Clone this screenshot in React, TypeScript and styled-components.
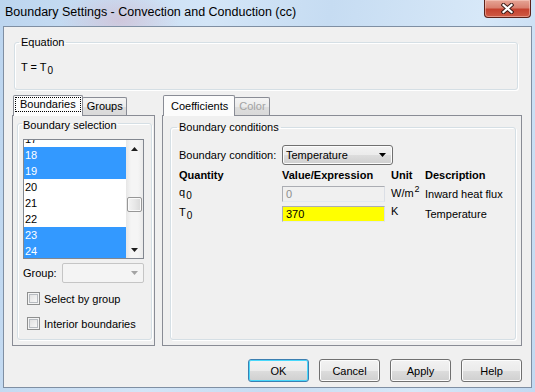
import styled, { createGlobalStyle } from 'styled-components';

const GlobalStyle = createGlobalStyle`
  html, body {
    margin: 0;
    padding: 0;
  }
  body {
    font-family: "Liberation Sans", Arial, sans-serif;
    font-size: 11px;
    color: #000;
    background: #bfd6ef;
  }
`;

const BOUNDARIES = [17, 18, 19, 20, 21, 22, 23, 24];
const SELECTED = [18, 19, 23, 24];
const LIST_SCROLL = 9;
const THUMB_OFFSET = 40;

const App = () => {
  return (
    <>
      <GlobalStyle />
      <Window>
        <TitleBar>
          <Title>Boundary Settings - Convection and Conduction (cc)</Title>
          <CloseButton aria-label="Close">
            <svg width="13" height="11" viewBox="0 0 13 11">
              <path d="M2.5 2 L10.5 9 M10.5 2 L2.5 9" stroke="#3d1d18" strokeWidth="4.2" strokeLinecap="square" />
              <path d="M2.5 2 L10.5 9 M10.5 2 L2.5 9" stroke="#fff" strokeWidth="2.2" strokeLinecap="square" />
            </svg>
          </CloseButton>
        </TitleBar>

        <Client>
          <EquationBox>
            <Legend>Equation</Legend>
            <EquationText>
              T = T<Sub>0</Sub>
            </EquationText>
          </EquationBox>

          <Panes>
            <TabControl $width={143}>
              <TabStrip>
                <Tab $active $focus>
                  <FocusLabel>Boundaries</FocusLabel>
                </Tab>
                <Tab>Groups</Tab>
              </TabStrip>
              <TabPage $padLeft={4} $padRight={2}>
                <SelectionBox>
                  <Legend $low>Boundary selection</Legend>
                  <ListBox>
                    <ListViewport>
                      <ListItems $scroll={LIST_SCROLL}>
                        {BOUNDARIES.map((n) => (
                          <ListItem key={n} $selected={SELECTED.includes(n)}>
                            {n}
                          </ListItem>
                        ))}
                      </ListItems>
                    </ListViewport>
                    <ScrollBar>
                      <ScrollButton>
                        <svg width="7" height="4" viewBox="0 0 7 4">
                          <polygon points="0,4 3.5,0 7,4" fill="#1e1e1e" />
                        </svg>
                      </ScrollButton>
                      <ScrollTrack $offset={THUMB_OFFSET}>
                        <Thumb />
                      </ScrollTrack>
                      <ScrollButton>
                        <svg width="7" height="4" viewBox="0 0 7 4">
                          <polygon points="0,0 7,0 3.5,4" fill="#1e1e1e" />
                        </svg>
                      </ScrollButton>
                    </ScrollBar>
                  </ListBox>

                  <GroupRow>
                    <span>Group:</span>
                    <DisabledCombo>
                      <svg width="7" height="4" viewBox="0 0 7 4">
                        <polygon points="0,0 7,0 3.5,4" fill="#a3a3a3" />
                      </svg>
                    </DisabledCombo>
                  </GroupRow>

                  <CheckRow>
                    <CheckBox />
                    Select by group
                  </CheckRow>
                  <CheckRow>
                    <CheckBox />
                    Interior boundaries
                  </CheckRow>
                </SelectionBox>
              </TabPage>
            </TabControl>

            <TabControl $width={360}>
              <TabStrip>
                <Tab $active>Coefficients</Tab>
                <Tab $disabled>Color</Tab>
              </TabStrip>
              <TabPage $padLeft={7} $padRight={5}>
                <ConditionsBox>
                  <Legend>Boundary conditions</Legend>
                  <ConditionRow>
                    <ConditionLabel>Boundary condition:</ConditionLabel>
                    <Combo>
                      <span>Temperature</span>
                      <svg width="7" height="4" viewBox="0 0 7 4">
                        <polygon points="0,0 7,0 3.5,4" fill="#000" />
                      </svg>
                    </Combo>
                  </ConditionRow>
                  <CoeffGrid>
                    <HeadCell>Quantity</HeadCell>
                    <HeadCell>Value/Expression</HeadCell>
                    <HeadCell>Unit</HeadCell>
                    <HeadCell>Description</HeadCell>

                    <SymbolCell>
                      q<Sub>0</Sub>
                    </SymbolCell>
                    <Cell>
                      <ValueInput $disabled>0</ValueInput>
                    </Cell>
                    <UnitCell>
                      W/m<Sup>2</Sup>
                    </UnitCell>
                    <Cell>Inward heat flux</Cell>

                    <SymbolCell>
                      T<Sub>0</Sub>
                    </SymbolCell>
                    <Cell>
                      <ValueInput $highlight>370</ValueInput>
                    </Cell>
                    <UnitCell $raised>K</UnitCell>
                    <Cell>Temperature</Cell>
                  </CoeffGrid>
                </ConditionsBox>
              </TabPage>
            </TabControl>
          </Panes>

          <ButtonRow>
            <DialogButton $default>OK</DialogButton>
            <DialogButton>Cancel</DialogButton>
            <DialogButton>Apply</DialogButton>
            <DialogButton>Help</DialogButton>
          </ButtonRow>
        </Client>
      </Window>
    </>
  );
};

export default App;

const Window = styled.div`
  width: 535px;
  height: 392px;
  display: flex;
  flex-direction: column;
  background:
    radial-gradient(ellipse 60px 30px at 120px 20px, rgba(214, 170, 190, 0.45), transparent),
    linear-gradient(100deg, #bcd5ef 0%, #d3e5f7 35%, #c6dcf2 55%, #d7e8f8 80%, #c2d9f1 100%);
`;

const TitleBar = styled.div`
  height: 26px;
  display: flex;
  align-items: flex-start;
`;

const Title = styled.div`
  padding: 4px 0 0 5px;
  font-size: 12.5px;
  line-height: 17px;
  color: #000;
`;

const CloseButton = styled.div`
  margin-left: auto;
  margin-right: 4px;
  width: 45px;
  height: 17px;
  display: flex;
  align-items: center;
  justify-content: center;
  border: 1px solid #5b2119;
  border-top: none;
  border-radius: 0 0 4px 4px;
  background: linear-gradient(#e6a596 0%, #d9806f 45%, #c5422f 55%, #cf5b45 100%);
  box-shadow: inset 0 0 0 1px rgba(255, 220, 210, 0.45);
`;

const Client = styled.div`
  flex: 1;
  margin: 0 3px 4px 3px;
  border: 1px solid #7f8fa3;
  background: #f0f0f0;
  padding-top: 9px;
  display: flex;
  flex-direction: column;
`;

const GroupBox = styled.fieldset`
  margin: 0;
  min-width: 0;
  border: 1px solid #d5dfe5;
  border-radius: 3px;
  box-shadow: inset 1px 1px 0 #fff, 1px 1px 0 #fff;
`;

const EquationBox = styled(GroupBox)`
  margin-left: 10px;
  width: 504px;
  height: 54px;
  box-sizing: border-box;
  padding: 0 6px;
`;

const SelectionBox = styled(GroupBox)`
  flex: 1;
  padding: 8px 0 0 5px;
  display: flex;
  flex-direction: column;
`;

const ConditionsBox = styled(GroupBox)`
  flex: 1;
  margin-top: 5px;
  padding: 11px 0 0 8px;
`;

const Legend = styled.legend<{ $low?: boolean }>`
  padding: ${(p) => (p.$low ? '4px 1px 0' : '0 2px')};
  margin-left: ${(p) => (p.$low ? '-1px' : '-2px')};
  line-height: ${(p) => (p.$low ? '11px' : '13px')};
  font-size: 11px;
`;

const EquationText = styled.div`
  padding-top: 12px;
  line-height: 13px;
`;

const Sub = styled.span`
  font-size: 10px;
  position: relative;
  top: 3px;
  margin-left: 1px;
`;

const Sup = styled.span`
  font-size: 9px;
  position: relative;
  top: -5px;
  margin-left: 1px;
`;

const Panes = styled.div`
  margin-top: 5px;
  height: 251px;
  padding-left: 8px;
  display: flex;
  gap: 7px;
`;

const TabControl = styled.div<{ $width: number }>`
  width: ${(p) => p.$width}px;
  display: flex;
  flex-direction: column;
`;

const TabStrip = styled.div`
  height: 20px;
  padding-left: 1px;
  display: flex;
  align-items: flex-end;
`;

const Tab = styled.div<{ $active?: boolean; $focus?: boolean; $disabled?: boolean }>`
  position: relative;
  z-index: ${(p) => (p.$active ? 1 : 0)};
  box-sizing: border-box;
  height: ${(p) => (p.$active ? '21px' : '18px')};
  margin-bottom: ${(p) => (p.$active ? '-1px' : '0')};
  padding: ${(p) => (p.$focus ? '1px 1px 0' : p.$active ? '0 6px 0 7px' : '0 3px 0 4px')};
  display: flex;
  align-items: ${(p) => (p.$focus ? 'flex-start' : 'center')};
  border: 1px solid #898c95;
  border-bottom: none;
  border-radius: 2px 2px 0 0;
  & + & {
    margin-left: -1px;
  }
  color: ${(p) => (p.$disabled ? '#a3a3a3' : '#000')};
  background: ${(p) =>
    p.$active ? '#fcfcfc' : 'linear-gradient(#f4f4f4 0%, #ebebeb 50%, #dedede 51%, #d9d9d9 100%)'};
  line-height: 13px;
`;

const FocusLabel = styled.span`
  padding: 0 4px;
  border: 1px dotted #000;
  line-height: 13px;
`;

const TabPage = styled.div<{ $padLeft: number; $padRight: number }>`
  flex: 1;
  border: 1px solid #898c95;
  background: #f0f0f0;
  padding: 0 ${(p) => p.$padRight}px 5px ${(p) => p.$padLeft}px;
  display: flex;
  flex-direction: column;
`;

const ListBox = styled.div`
  width: 121px;
  height: 120px;
  box-sizing: border-box;
  border: 1px solid #828790;
  background: #fff;
  display: flex;
`;

const ListViewport = styled.div`
  flex: 1;
  overflow: hidden;
`;

const ListItems = styled.div<{ $scroll: number }>`
  margin-top: ${(p) => -p.$scroll}px;
`;

const ListItem = styled.div<{ $selected: boolean }>`
  height: 16px;
  line-height: 16px;
  padding-left: 1px;
  color: ${(p) => (p.$selected ? '#fff' : '#000')};
  background: ${(p) => (p.$selected ? '#3399ff' : '#fff')};
`;

const ScrollBar = styled.div`
  width: 17px;
  display: flex;
  flex-direction: column;
  background: linear-gradient(90deg, #e6e6e6, #f5f5f5 30%, #f5f5f5 70%, #eaeaea);
`;

const ScrollButton = styled.div`
  height: 17px;
  display: flex;
  align-items: center;
  justify-content: center;
`;

const ScrollTrack = styled.div<{ $offset: number }>`
  flex: 1;
  padding-top: ${(p) => p.$offset}px;
`;

const Thumb = styled.div`
  margin: 0 0 0 1px;
  width: 15px;
  height: 15px;
  box-sizing: border-box;
  border: 1px solid #979797;
  border-radius: 2px;
  background: linear-gradient(90deg, #f4f4f4, #e8e8e8 50%, #d9d9d9);
  box-shadow: inset 0 0 0 1px #fafafa;
`;

const GroupRow = styled.div`
  width: 121px;
  margin-top: 4px;
  display: flex;
  align-items: center;
  justify-content: space-between;
`;

const DisabledCombo = styled.div`
  width: 82px;
  height: 20px;
  box-sizing: border-box;
  border: 1px solid #c5c5c5;
  border-radius: 2px;
  background: #f4f4f4;
  display: flex;
  align-items: center;
  justify-content: flex-end;
  padding-right: 5px;
`;

const CheckRow = styled.label`
  display: flex;
  align-items: center;
  gap: 4px;
  height: 13px;
  margin: 9px 0 0 4px;
  & + & {
    margin-top: 12px;
  }
`;

const CheckBox = styled.span`
  width: 13px;
  height: 13px;
  box-sizing: border-box;
  border: 1px solid #8e8f8f;
  background: linear-gradient(135deg, #dcdcdc, #fdfdfd);
  box-shadow: inset 0 0 0 1px #f4f4f4, inset 0 0 0 2px #b7bbc0;
`;

const ConditionRow = styled.div`
  display: flex;
  align-items: center;
  height: 20px;
`;

const ConditionLabel = styled.span`
  width: 103px;
`;

const Combo = styled.div`
  width: 111px;
  height: 20px;
  box-sizing: border-box;
  padding: 0 6px 0 3px;
  border: 1px solid #707070;
  border-radius: 3px;
  background: linear-gradient(#f2f2f2 0%, #ebebeb 50%, #dddddd 51%, #cfcfcf 100%);
  box-shadow: inset 0 0 0 1px #fcfcfc;
  display: flex;
  align-items: center;
  justify-content: space-between;
`;

const CoeffGrid = styled.div`
  display: grid;
  grid-template-columns: 103px 109px 34px 1fr;
  grid-template-rows: 19px 20px 20px;
  align-items: center;
`;

const HeadCell = styled.div`
  font-weight: bold;
`;

const Cell = styled.div`
  line-height: 13px;
`;

const SymbolCell = styled.div`
  line-height: 13px;
  padding-bottom: 4px;
`;

const UnitCell = styled.div<{ $raised?: boolean }>`
  line-height: 13px;
  padding-bottom: ${(p) => (p.$raised ? '5px' : '1px')};
`;

const ValueInput = styled.div<{ $disabled?: boolean; $highlight?: boolean }>`
  width: 103px;
  height: 16px;
  box-sizing: border-box;
  padding-left: 3px;
  line-height: 14px;
  border: 1px solid #abadb3;
  border-right-color: #dbdfe6;
  border-bottom-color: #e3e9ef;
  color: ${(p) => (p.$disabled ? '#8d8d8d' : '#000')};
  background: ${(p) => (p.$highlight ? '#ffff00' : p.$disabled ? '#f0f0f0' : '#fff')};
`;

const ButtonRow = styled.div`
  margin-top: 13px;
  padding-right: 9px;
  display: flex;
  justify-content: flex-end;
  gap: 10px;
`;

const DialogButton = styled.button<{ $default?: boolean }>`
  width: 61px;
  height: 23px;
  padding: 0;
  font-family: inherit;
  font-size: 11px;
  color: #000;
  border: 1px solid ${(p) => (p.$default ? '#3c7fb1' : '#707070')};
  border-radius: 3px;
  background: linear-gradient(#f2f2f2 0%, #ebebeb 50%, #dddddd 51%, #cfcfcf 100%);
  box-shadow: inset 0 0 0 1px ${(p) => (p.$default ? '#48d8fb' : '#fcfcfc')};
`;
